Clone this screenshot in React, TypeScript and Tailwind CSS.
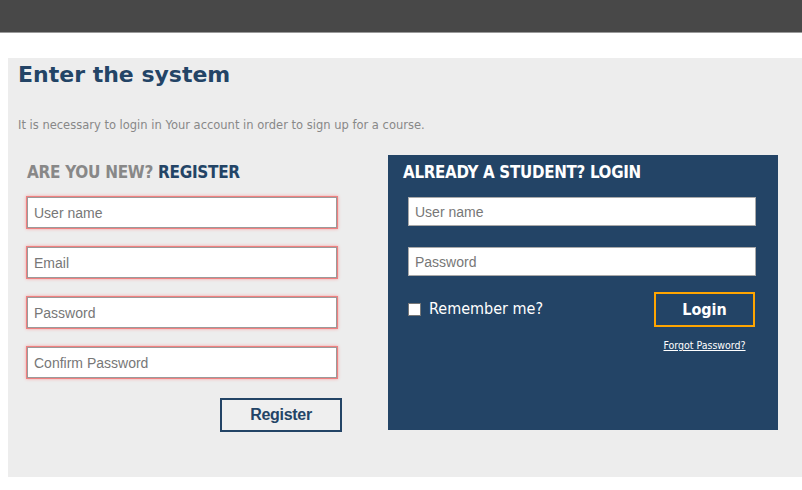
import { useState } from "react";

const regInput =
  "w-[310px] h-[31px] px-[6px] bg-white border border-[#9a9a9a] shadow-[0_0_0_1px_#f08080,0_0_3px_1px_#f5a0a0] text-[14px] text-[#333] placeholder:text-[#777] outline-none";
const loginInput =
  "w-[348px] h-[29px] px-[6px] bg-white border border-[#a9a9a9] text-[14px] text-[#333] placeholder:text-[#777] outline-none";

export default function App() {
  const [remember, setRemember] = useState(false);

  return (
    <div className="w-[802px] h-[490px] bg-white overflow-hidden font-['DejaVu_Sans',sans-serif]">
      {/* top bar */}
      <div className="h-[33px] bg-[#484848] border-b border-[#9a9a9a]" />

      <div className="mt-[25px] ml-[8px] h-[419px] bg-[#ededed] pl-[10px]">
        <h1 className="pt-[2px] text-[22px] leading-[30px] font-bold text-[#234466]">Enter the system</h1>
        <p className="mt-[27px] text-[11.5px] text-[#888]">
          It is necessary to login in Your account in order to sign up for a course.
        </p>

        <div className="mt-[20px] flex">
          {/* register */}
          <div className="w-[370px] pl-[9px] pt-[8px] font-['Liberation_Sans',Arial,sans-serif]">
            <h2 className="text-[17px] leading-[20px] font-bold tracking-[-0.3px] font-['DejaVu_Sans_Condensed','DejaVu_Sans',sans-serif]">
              <span className="text-[#888]">ARE YOU NEW? </span>
              <span className="text-[#234466]">REGISTER</span>
            </h2>
            <form className="mt-[15px] flex flex-col gap-[19px]" onSubmit={(e) => e.preventDefault()}>
              <input className={regInput} placeholder="User name" />
              <input className={regInput} placeholder="Email" />
              <input className={regInput} type="password" placeholder="Password" />
              <input className={regInput} type="password" placeholder="Confirm Password" />
              <div className="w-[315px] flex justify-end mt-[1px]">
                <button
                  type="submit"
                  className="w-[122px] h-[34px] border-2 border-[#234466] bg-[#efefef] text-[16px] font-bold text-[#234466] tracking-[-0.3px]"
                >
                  Register
                </button>
              </div>
            </form>
          </div>

          {/* login */}
          <div className="w-[390px] h-[275px] bg-[#234466] pl-[15px] pt-[7px] mt-[1px]">
            <h2 className="text-[16.8px] leading-[20px] font-bold text-white tracking-[-0.3px] font-['DejaVu_Sans_Condensed','DejaVu_Sans',sans-serif]">
              ALREADY A STUDENT? LOGIN
            </h2>
            <form className="mt-[15px] pl-[5px] flex flex-col gap-[21px] font-['Liberation_Sans',Arial,sans-serif]" onSubmit={(e) => e.preventDefault()}>
              <input className={loginInput} placeholder="User name" />
              <input className={loginInput} type="password" placeholder="Password" />
              <div className="w-[348px] flex justify-between items-start -mt-[5px]">
                <label className="flex items-center gap-[8px] mt-[5px] text-[16px] text-white font-['DejaVu_Sans_Condensed','DejaVu_Sans',sans-serif]">
                  <input
                    type="checkbox"
                    checked={remember}
                    onChange={(e) => setRemember(e.target.checked)}
                    className="appearance-none w-[13px] h-[13px] bg-white border border-[#777] m-0"
                  />
                  Remember me?
                </label>
                <div className="flex flex-col items-center mr-[1px]">
                  <button
                    type="submit"
                    className="w-[101px] h-[35px] border-2 border-[#ffa500] text-[16px] font-bold text-white font-['DejaVu_Sans_Condensed','DejaVu_Sans',sans-serif]"
                  >
                    Login
                  </button>
                  <a href="#" className="mt-[11px] text-[10.5px] text-white underline font-['DejaVu_Sans_Condensed','DejaVu_Sans',sans-serif]">
                    Forgot Password?
                  </a>
                </div>
              </div>
            </form>
          </div>
        </div>
      </div>
    </div>
  );
}
